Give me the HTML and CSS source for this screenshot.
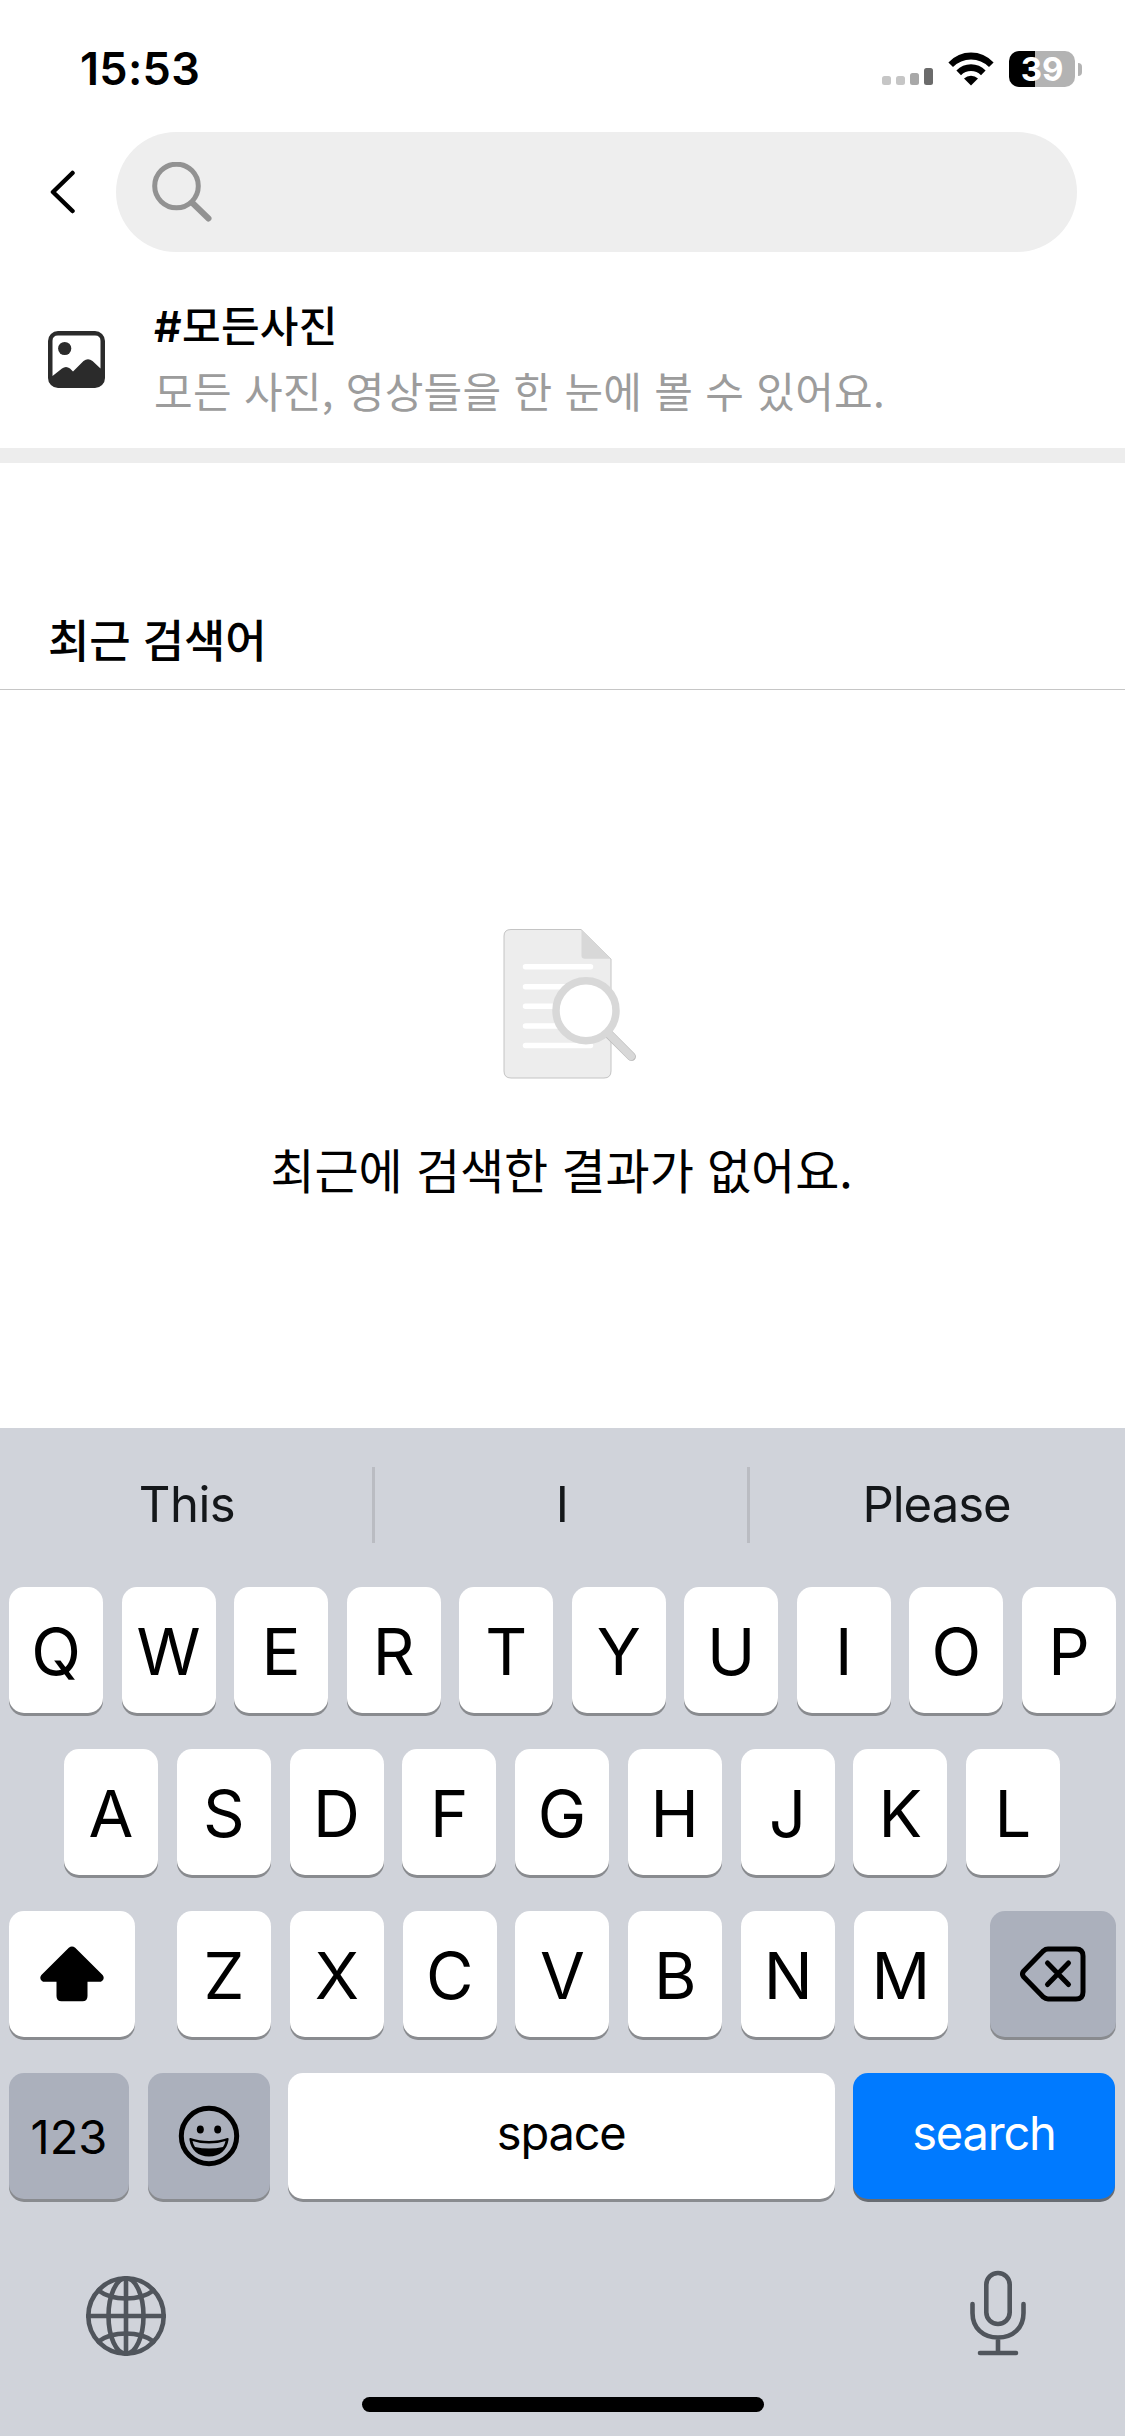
FILE: index.html
```html
<!DOCTYPE html>
<html lang="ko">
<head>
<meta charset="utf-8">
<title>검색</title>
<link rel="stylesheet" href="styles.css">
</head>
<body>
<main class="screen">
  <header class="status">
    <span class="time">15:53</span>
    <div class="indicators">
      <svg class="signal" width="51" height="18" viewBox="0 0 51 18">
        <rect x="0" y="9" width="9" height="9" rx="2.5" fill="#c6c6c6"/>
        <rect x="14" y="9" width="9" height="9" rx="2.5" fill="#c6c6c6"/>
        <rect x="28" y="6" width="9" height="12" rx="2.5" fill="#a8a8a8"/>
        <rect x="42" y="1" width="9" height="17" rx="2.5" fill="#6b6b6b"/>
      </svg>
      <svg class="wifi" width="46" height="34" viewBox="0 0 46 34">
        <path d="M0.4 10.4Q10 .5 23 .5T45.600 10.400L41 15Q33.500 7.400 23 7.400T5 15Z"/>
        <path d="M8.400 18.500Q14.500 12.300 23 12.300T37.600 18.500L33 23.200Q28.800 19 23 19T13 23.200Z"/>
        <path d="M16 26.500Q19 23.700 23 23.700T30 26.500L23 33.500Z"/>
      </svg>
      <div class="battery"><span class="level">39</span><i class="nub"></i></div>
    </div>
  </header>

  <div class="searchbar">
    <svg class="back" width="26" height="44" viewBox="0 0 26 44"><path d="M22.500 3L3 22L22.500 41"/></svg>
    <div class="field">
      <svg width="62" height="60" viewBox="0 0 62 60"><circle cx="24.500" cy="24" r="21.800"/><path class="handle" d="M40.500 41L56.500 56.500"/></svg>
    </div>
  </div>

  <section class="shortcut">
    <svg width="57" height="57" viewBox="0 0 57 57">
      <path fill-rule="evenodd" d="M10 0H47A10 10 0 0 1 57 10V47A10 10 0 0 1 47 57H10A10 10 0 0 1 0 47V10A10 10 0 0 1 10 0ZM10 4.500Q4.500 4.500 4.500 10V45L14 37.500Q18 34.500 22 37.500L25 40.500L35.500 30Q40 26.300 44.500 30L52.500 37.500V10Q52.500 4.500 47 4.500Z"/>
      <circle cx="16.700" cy="17.500" r="6.600"/>
    </svg>
    <div class="labels">
      <div class="tag"><span class="hash">#</span>모든사진</div>
      <div class="hint">모든 사진, 영상들을 한 눈에 볼 수 있어요.</div>
    </div>
  </section>

  <h2 class="heading">최근 검색어</h2>

  <section class="empty">
    <svg width="134" height="152" viewBox="0 0 134 152">
      <path fill="#ededed" stroke="#c4c4c4" d="M8 1.500H78L108 31V143Q108 150 101 150H8Q1 150 1 143V8Q1 1.500 8 1.500Z"/>
      <path fill="#d8d8d8" d="M78.500 1.500L108 30.800H82Q78.500 30.800 78.500 27.500Z"/>
      <path stroke="#fff" stroke-width="5.500" stroke-linecap="round" d="M22.500 38.700H87.500M22.500 58.700H87.500M22.500 78.300H87.500M22.500 98H87.500M22.500 117.600H87.500"/>
      <path stroke="#bdbdbd" stroke-width="9" stroke-linecap="round" d="M106 106.300L128.500 128.600"/>
      <path stroke="#d8d8d8" stroke-width="7.800" stroke-linecap="round" d="M104 104L128 128.300"/>
      <circle cx="83" cy="82.700" r="30" fill="#fff" stroke="#d8d8d8" stroke-width="7.500"/>
    </svg>
    <p class="message">최근에 검색한 결과가 없어요.</p>
  </section>

  <section class="keyboard">
    <div class="suggestions"><span>This</span><span>I</span><span class="long">Please</span></div>
    <div class="row first"><b class="key">Q</b><b class="key">W</b><b class="key">E</b><b class="key">R</b><b class="key">T</b><b class="key">Y</b><b class="key">U</b><b class="key">I</b><b class="key">O</b><b class="key">P</b></div>
    <div class="row second"><b class="key">A</b><b class="key">S</b><b class="key">D</b><b class="key">F</b><b class="key">G</b><b class="key">H</b><b class="key">J</b><b class="key">K</b><b class="key">L</b></div>
    <div class="row third">
      <b class="key wide">
        <svg width="64" height="56" viewBox="0 0 64 56"><path d="M28.800 1.800Q32 -1 35.200 1.800L62.600 29Q65.500 33 61 35.800H47.500V50Q47.500 55.300 42.500 55.300H21.500Q16.500 55.300 16.500 50V35.800H3Q-1.500 33 1.400 29Z"/></svg>
      </b>
      <div class="letters"><b class="key">Z</b><b class="key">X</b><b class="key">C</b><b class="key">V</b><b class="key">B</b><b class="key">N</b><b class="key">M</b></div>
      <b class="key wide gray">
        <svg class="line" width="66" height="56" viewBox="0 0 66 56"><path d="M28 3H56Q63 3 63 10V46Q63 53 56 53H28Q25.500 53 23.500 51.200L3.800 31Q1.200 28 3.800 25L23.500 4.800Q25.500 3 28 3Z"/><path d="M27.500 17L48.500 38.500M48.500 17L27.500 38.500"/></svg>
      </b>
    </div>
    <div class="row fourth">
      <b class="key gray numbers">123</b>
      <b class="key gray emoji">
        <svg width="62" height="62" viewBox="0 0 62 62">
          <circle cx="31" cy="31" r="27.700" fill="none" stroke="#000" stroke-width="5"/>
          <ellipse cx="22.300" cy="24.500" rx="3.500" ry="3.900"/><ellipse cx="39.700" cy="24.500" rx="3.500" ry="3.900"/>
          <path fill-rule="evenodd" d="M12.500 33Q11 32.500 11.500 35C13 45 20 51.500 31 51.500S49 45 50.500 35Q51 32.500 49.500 33Q41 36 31 36T12.500 33ZM14.500 36Q22 38.500 31 38.500T47.500 36Q47 39 45 42Q38 43.500 31 43.500T17 42Q15 39 14.500 36Z"/>
        </svg>
      </b>
      <b class="key word">space</b>
      <b class="key word go">search</b>
    </div>
    <div class="tools">
      <svg class="globe" width="80" height="80" viewBox="0 0 80 80"><circle cx="40" cy="40" r="37.700"/><path d="M40 2V78M2 40H78"/><ellipse cx="40" cy="40" rx="17.500" ry="37.700"/><path d="M12.500 14.500Q23 22.500 40 22.500T67.500 14.500M12.500 65.500Q23 57.500 40 57.500T67.500 65.500"/></svg>
      <svg class="mic" width="56" height="86" viewBox="0 0 56 86"><rect x="16.300" y="3" width="23.400" height="51" rx="11.700"/><path d="M2.500 34V43C2.500 58 13 67.500 28 67.500S53.500 58 53.500 43V34M28 68V83M10 83H46"/></svg>
    </div>
    <div class="home"></div>
  </section>
</main>
</body>
</html>
```
FILE: styles.css
```css
* { box-sizing: border-box; }
body { margin: 0; background: #fff; color: #000; font-family: "Inter", "Noto Sans CJK KR", sans-serif; }
svg { display: block; flex: none; }
.screen { width: 1125px; height: 2436px; display: flex; flex-direction: column; overflow: hidden; }

.status { height: 132px; padding: 6px 43px 0 80px; display: flex; align-items: center; justify-content: space-between; }
.time { font-size: 45px; font-weight: 600; line-height: 54px; letter-spacing: 0.3px; }
.indicators { display: flex; align-items: center; }
.signal { margin: 14px 15px 0 0; }
.wifi { margin-right: 15px; }
.battery { display: flex; align-items: center; gap: 3px; }
.level { width: 66px; height: 36px; border-radius: 10px; background: linear-gradient(90deg, #000 26px, #b3b3b3 26px); color: #fff; font-size: 33px; font-weight: 700; line-height: 37px; text-align: center; }
.nub { width: 4px; height: 13px; border-radius: 0 6px 6px 0; background: #b3b3b3; }

.searchbar { height: 120px; padding: 0 48px 0 50px; display: flex; align-items: center; }
.back { margin-right: 40px; fill: none; stroke: #000; stroke-width: 4.500; stroke-linecap: round; stroke-linejoin: round; }
.field { flex: 1; height: 120px; border-radius: 60px; background: #eee; padding: 30px 36px; }
.field svg { fill: none; stroke: #929292; stroke-width: 5; }
.field .handle { stroke-width: 6; stroke-linecap: round; }

.shortcut { height: 211px; padding: 36px 48px 0; border-bottom: 15px solid #ededed; display: flex; gap: 49px; }
.shortcut svg { margin-top: 43px; fill: #2b2b2b; }
.labels { font-family: "Noto Sans CJK KR", sans-serif; font-size: 42px; line-height: 66px; white-space: nowrap; margin-top: 3px; }
.tag { font-weight: 500; letter-spacing: 0.3px; }
.hash { font-family: "Inter", sans-serif; font-weight: 600; font-size: 43px; line-height: 1; }
.hint { color: #9c9c9c; letter-spacing: 0.28px; }

.heading { margin: 0; height: 227px; padding: 143px 48px 0; border-bottom: 1px solid #c6c6c6; font: 500 45px/66px "Noto Sans CJK KR", sans-serif; letter-spacing: -0.2px; }
.empty { height: 738px; padding-top: 238px; display: flex; flex-direction: column; align-items: center; }
.empty svg { fill: none; margin-left: 15px; }
.message { margin: 55px 2px 0 0; font: 400 48px/66px "Noto Sans CJK KR", sans-serif; letter-spacing: -0.1px; }

.keyboard { height: 1008px; background: #d0d3da; display: flex; flex-direction: column; }
.suggestions { height: 159px; padding: 39px 0 46px; display: grid; grid-template-columns: 375px 375px 375px; color: #14171a; font-size: 49px; line-height: 76px; text-align: center; letter-spacing: -0.5px; }
.suggestions span { padding-left: 2px; }
.suggestions span:not(:last-child) { border-right: 3px solid #babcc2; }
.suggestions .long { letter-spacing: -1px; padding: 0 2px 0 0; }
.row { display: flex; justify-content: space-between; height: 126px; margin-bottom: 36px; padding: 0 9px; }
.second { padding: 0 65px 0 64px; }
.key { width: 94px; height: 126px; padding-top: 3px; border-radius: 15px; background: #fff; box-shadow: 0 3px 0 #898b8f; display: flex; align-items: center; justify-content: center; font-size: 65px; font-weight: 400; }
.wide { width: 126px; padding: 0; }
.gray { background: #abb0bc; }
.letters { width: 771px; display: flex; justify-content: space-between; }
.line { fill: none; stroke: #000; stroke-width: 5; stroke-linecap: round; stroke-linejoin: round; }
.fourth { padding-right: 10px; }
.numbers { width: 120px; font-size: 47px; padding: 0; }
.emoji { width: 122px; padding: 0; margin-left: 1px; }
.word { width: 547px; padding: 0 0 8px; font-size: 47px; letter-spacing: -1.2px; }
.word.go { width: 262px; background: #007aff; color: #fff; box-shadow: 0 3px 0 #686c72; }
.emoji + .word { margin-left: -1px; }
.tools { height: 84px; margin-top: 35px; padding: 0 99px 0 86px; display: flex; justify-content: space-between; }
.tools svg { fill: none; stroke: #50555c; stroke-width: 4.600; stroke-linecap: round; }
.globe { margin-top: 6px; }
.home { width: 402px; height: 15px; margin: 43px auto 0; border-radius: 8px; background: #000; }
```
